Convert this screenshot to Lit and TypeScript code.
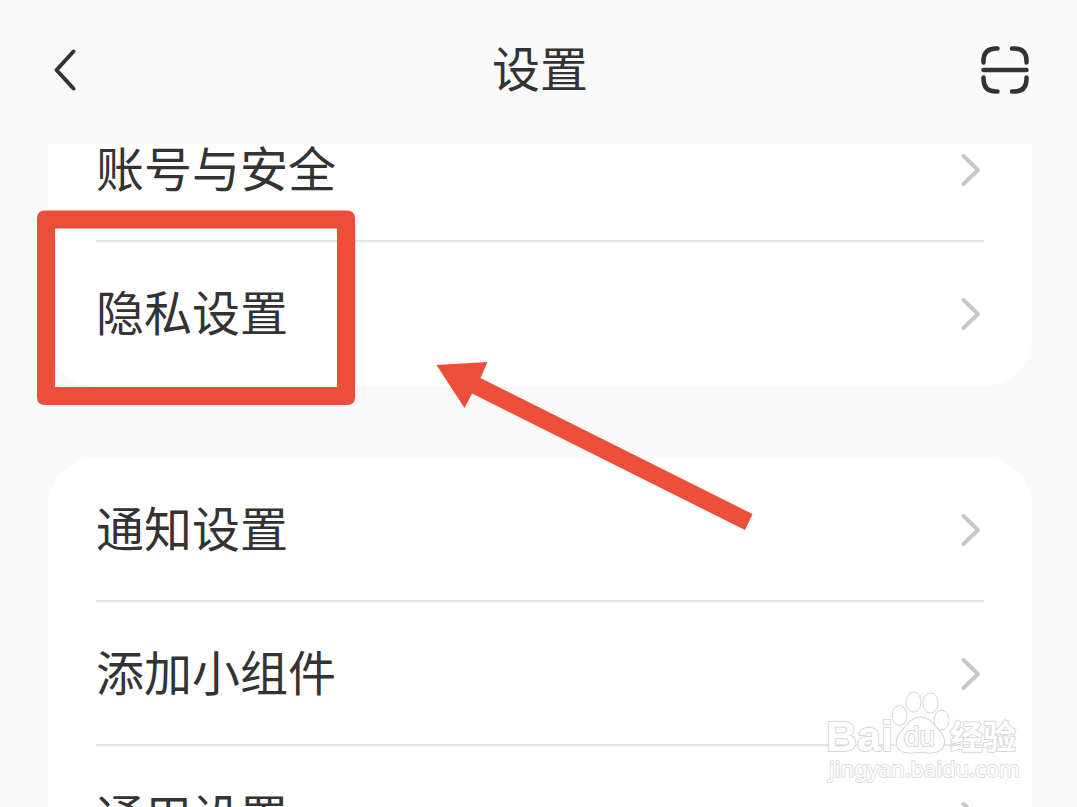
import { LitElement, html, css } from "lit";
import { customElement, property } from "lit/decorators.js";

@customElement("settings-group")
class SettingsGroup extends LitElement {
  @property({ attribute: false }) items: string[] = [];

  static styles = css`
    :host {
      display: block;
      background: #fff;
      border-radius: 48px;
      padding: 0 48px;
    }
    .list {
      list-style: none;
      margin: 0;
      padding: 0;
    }
    .item + .item .row::before {
      content: "";
      position: absolute;
      left: 0;
      right: 0;
      top: -2px;
      height: 2px;
      background: #e6e6e6;
    }
    .row {
      position: relative;
      display: flex;
      align-items: center;
      justify-content: space-between;
      height: 144px;
      color: #333;
      text-decoration: none;
      font-size: 48px;
      line-height: 64px;
    }
    .label {
      padding-bottom: 8px;
    }
    .chevron {
      width: 24px;
      height: 40px;
      fill: none;
      stroke: #c8c8c8;
      stroke-width: 4;
      stroke-linecap: round;
      stroke-linejoin: round;
    }
  `;

  render() {
    return html`<ul class="list">
      ${this.items.map(
        (label) => html`<li class="item">
          <a class="row" href="#">
            <span class="label">${label}</span>
            <svg class="chevron" viewBox="0 0 24 40" aria-hidden="true">
              <path d="M3.5 6L18 20L3.5 34" />
            </svg>
          </a>
        </li>`
      )}
    </ul>`;
  }
}

@customElement("app-root")
class AppRoot extends LitElement {
  static styles = css`
    :host {
      position: relative;
      display: flex;
      flex-direction: column;
      height: 100vh;
      overflow: hidden;
      background: #fafafa;
      color: #333;
      font-family: "Noto Sans CJK SC", sans-serif;
    }
    .header {
      flex: none;
      display: flex;
      align-items: center;
      justify-content: space-between;
      height: 140px;
      padding: 0 45px 4px 48px;
    }
    .title {
      margin: 0;
      padding-bottom: 8px;
      font-size: 48px;
      line-height: 64px;
      font-weight: 400;
    }
    .icon-button {
      display: flex;
      width: 54px;
      height: 54px;
      padding: 0;
      border: 0;
      background: none;
      color: #333;
    }
    .icon {
      width: 54px;
      height: 54px;
      fill: none;
      stroke: currentColor;
      stroke-linecap: round;
      stroke-linejoin: round;
    }
    .content {
      flex: 1;
      min-height: 0;
      overflow: hidden;
      padding: 0 45px 0 48px;
    }
    .groups {
      display: flex;
      flex-direction: column;
      gap: 72px;
      margin-top: -46px;
    }
    .annotation {
      position: absolute;
      left: 0;
      top: 0;
      width: 800px;
      height: 560px;
      pointer-events: none;
      fill: #ec4e39;
    }
    .watermark {
      position: absolute;
      right: 53px;
      bottom: 17px;
      width: 204px;
      height: 110px;
      pointer-events: none;
      fill: #fff;
      stroke: #d6d6d6;
      stroke-width: 2;
      paint-order: stroke;
      stroke-linejoin: round;
    }
    .brand {
      font: 700 43px "Liberation Sans", sans-serif;
    }
    .du {
      font: 400 28px "Liberation Sans", sans-serif;
    }
    .brand-cn {
      font: 700 33px "Noto Sans CJK SC", sans-serif;
    }
    .site {
      font: 400 22px "Noto Sans", sans-serif;
      stroke: #dedede;
    }
  `;

  render() {
    return html`
      <header class="header">
        <button class="icon-button" aria-label="返回">
          <svg class="icon" viewBox="0 0 54 54" stroke-width="4">
            <path d="M25.5 8.5L8.5 27L25.5 45.5" />
          </svg>
        </button>
        <h1 class="title">设置</h1>
        <button class="icon-button" aria-label="扫一扫">
          <svg class="icon" viewBox="0 0 54 54" stroke-width="4.5">
            <path d="M5.5 19.5V18Q5.5 5.5 18 5.5H19.5M34 5.5H36Q48.5 5.5 48.5 18V19.5M5.5 34.5V36Q5.5 48.5 18 48.5H19.5M34 48.5H36Q48.5 48.5 48.5 36V34.5M5.5 27H48.5" />
          </svg>
        </button>
      </header>
      <main class="content">
        <div class="groups">
          <settings-group .items=${["账号与安全", "隐私设置"]}></settings-group>
          <settings-group .items=${["通知设置", "添加小组件", "通用设置"]}></settings-group>
        </div>
      </main>
      <svg class="annotation" viewBox="0 0 800 560" aria-hidden="true">
        <path fill-rule="evenodd" d="M45 210.5H347Q355 210.5 355 218.5V397Q355 405 347 405H45Q37 405 37 397V218.5Q37 210.5 45 210.5ZM55 228.5V387H337V228.5Z" />
        <path d="M436.5 365L487.5 362L480.5 378L752.5 514L745 530L472 393.5L464.5 408Z" />
      </svg>
      <svg class="watermark" viewBox="820 680 204 110">
        <text class="brand" x="826" y="751">Bai</text>
        <g>
          <ellipse cx="899.5" cy="715.5" rx="7" ry="9.5" />
          <ellipse cx="913.5" cy="702" rx="7" ry="9.5" />
          <ellipse cx="930.5" cy="703" rx="7" ry="9.5" />
          <ellipse cx="941.5" cy="720" rx="7" ry="9.5" />
          <path d="M920.5 717.5C911 717.5 907 726 902 731C895 738 895 747 902 751C908 754 914 752 920.500 752C927 752 932 754 938 751C946 747 946 738 939 731C934 726 930 717.5 920.5 717.5Z" />
        </g>
        <text class="du" x="904" y="746">du</text>
        <text class="brand-cn" x="950" y="749">经验</text>
        <text class="site" x="829" y="777">jingyan.baidu.com</text>
      </svg>
    `;
  }
}
